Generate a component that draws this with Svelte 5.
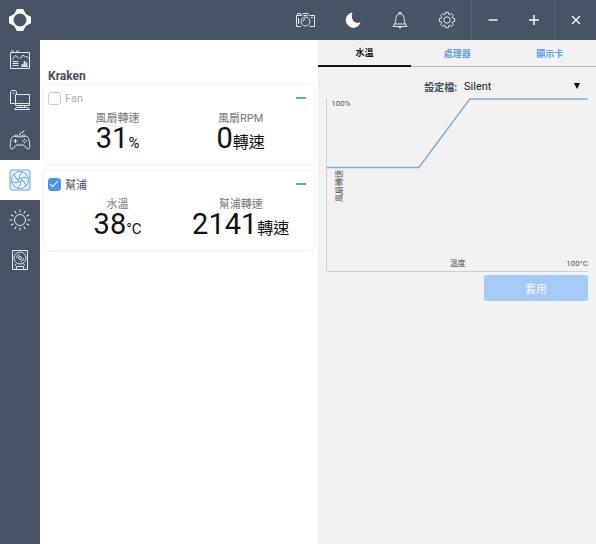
<script>
  const devices = $state([
    {
      id: 'fan',
      name: 'Fan',
      enabled: false,
      readings: [
        { label: '風扇轉速', value: '31', unit: '%' },
        { label: '風扇RPM', value: '0', unit: '轉速', wide: true }
      ]
    },
    {
      id: 'pump',
      name: '幫浦',
      enabled: true,
      readings: [
        { label: '水溫', value: '38', unit: '°C' },
        { label: '幫浦轉速', value: '2141', unit: '轉速', wide: true }
      ]
    }
  ]);

  const sections = ['dashboard', 'computer', 'games', 'cooling', 'lighting', 'storage'];
  const tabs = ['水溫', '處理器', '顯示卡'];
  const tools = ['camera', 'moon', 'bell', 'gear'];

  let section = $state('cooling');
  let tab = $state('水溫');
  let profile = $state('Silent');

  // eight-toothed gear outline
  const gear = Array.from({ length: 8 }, (_, i) => {
    const point = (r, deg) => {
      const a = ((i * 45 + deg) * Math.PI) / 180;
      return `${(12 + r * Math.cos(a)).toFixed(2)},${(12 + r * Math.sin(a)).toFixed(2)}`;
    };
    return [point(5.8, -18), point(7.8, -11), point(7.8, 11), point(5.8, 18)].join(' ');
  }).join(' ');
</script>

{#snippet icon(name)}
  <svg class="icon" viewBox="0 0 24 24" aria-hidden="true">
    {#if name === 'dashboard'}
      <path d="M2.500 4.500h19v16h-19zM3 3h3M8 3h3M4 11.500l3.500-4L11 10.500M12.500 10.500l2.500-3.500 2.500 2 1-1 2 2.500M4.500 13.500h6M4.500 15.500h6M4.500 17.500h6M13 18.500h7" />
      <path d="M14.500 18v-2M16.500 18v-5M18.500 18v-3.500" stroke-width="1.7" />
    {:else if name === 'computer'}
      <path d="M7.500 15.500h-5V3.500l1-1h4l1 1.500v2M4.500 5h2M7.500 6.500h14v11h-14zM7.500 15.500h14M12.500 17.500v2M16.500 17.500v2M8 19.500h12l1.500 2h-15z" />
    {:else if name === 'games'}
      <path d="M12 8V5.500c0-1.500 4-.5 4-3M8 8.500C4 7.500 3 10 2.500 14.500c-.5 4-.5 6.500 1.500 6.500s3-4 5-4h6c2 0 3 4 5 4s2-2.500 1.500-6.500C21 10 20 7.500 16 8.500c-2 .5-6 .5-8 0zM7 8c0-1.500 2.500-1.500 3 0M14 8c.5-1.500 3-1.500 3 0M7.500 11v4M5.500 13h4" />
      <circle cx="16.500" cy="11.300" r=".4" /><circle cx="16.500" cy="14.700" r=".4" />
      <circle cx="14.800" cy="13" r=".4" /><circle cx="18.200" cy="13" r=".4" />
    {:else if name === 'cooling'}
      <rect x="2" y="2" width="20" height="20" rx="1.500" />
      <circle cx="12" cy="12" r="8.500" /><circle cx="12" cy="12" r="1.800" />
      {#each [0, 60, 120, 180, 240, 300] as turn}
        <path d="M11.500 10.200c-.5-2.500.5-4.500 3-5.900" transform="rotate({turn} 12 12)" />
      {/each}
      <path d="M3.500 4h1M19.500 4h1M3.500 20h1M19.500 20h1" />
    {:else if name === 'lighting'}
      <circle cx="12" cy="12" r="5.500" />
      {#each [0, 30, 60, 90, 120, 150, 180, 210, 240, 270, 300, 330] as turn}
        <path d="M12 1.500v3" transform="rotate({turn} 12 12)" />
      {/each}
    {:else if name === 'storage'}
      <path d="M4.500 2.500h15v19h-15zM8.500 21v-2.500h7V21M8 16l-1.500 2M15.500 15.500l1 2" />
      <circle cx="12" cy="10" r="6" /><circle cx="12" cy="10" r="1.500" />
      <path d="M8.500 10a3.500 3.500 0 0 1 3-3.500M15.500 10a3.500 3.500 0 0 1-3 3.500M6 4h.5M17.500 4h.5M17.500 20h.5M6 20h.5" />
    {:else if name === 'camera'}
      <path d="M7 18.500H2.500V7.500h5L9 5.500h5l1.500 2h5v11h-5M3.500 7V5.500h3V7M4.500 10v6M19 9.500h-2M9.500 7.500h4" />
      <circle cx="11.500" cy="13.500" r="4.500" /><path d="M9 13.500a2.500 2.500 0 0 1 2.500-2.500" />
    {:else if name === 'moon'}
      <path class="solid" d="M11 5A7.200 7.200 0 1 0 19 15C13.500 17 8.500 11 11 5z" />
    {:else if name === 'bell'}
      <path d="M11 6V4.500h2V6M6.500 16c1.500-2 1-4 1.500-6.500C8.500 7 10 6 12 6s3.500 1 4 3.500c.5 2.500 0 4.500 1.500 6.500zM6.500 16l-1.500 2.500h14L17.500 16M10.500 18.500c0 1.800 3 1.800 3 0" />
    {:else if name === 'gear'}
      <polygon points={gear} /><circle cx="12" cy="12" r="3.200" />
    {/if}
  </svg>
{/snippet}

<div class="app">
  <header class="titlebar">
    <svg class="logo" viewBox="0 0 24 24" role="img" aria-label="CAM">
      <path
        fill-rule="evenodd"
        d="M10 1h4c1.500 0 2 .7 2.300 2 .3 1.200.8 1.600 1.700 3 1.400.9 1.800 1.400 3 1.700 1.300.3 2 .8 2 2.300v4c0 1.500-.7 2-2 2.300-1.200.3-1.600.8-3 1.700-.9 1.400-1.400 1.800-1.700 3-.3 1.300-.8 2-2.300 2h-4c-1.500 0-2-.7-2.300-2-.3-1.200-.8-1.600-1.700-3-1.400-.9-1.800-1.400-3-1.700-1.300-.3-2-.8-2-2.300v-4c0-1.500.7-2 2-2.300 1.200-.3 1.600-.8 3-1.700.9-1.400 1.400-1.800 1.700-3 .3-1.300.8-2 2.300-2zM12 5.500a6.500 6.500 0 1 0 0 13 6.500 6.500 0 0 0 0-13z"
      />
    </svg>
    <div class="tools">
      {#each tools as tool}
        <button aria-label={tool}>{@render icon(tool)}</button>
      {/each}
    </div>
    <div class="window-controls">
      <button aria-label="Minimize"><svg viewBox="0 0 12 12"><path d="M1.500 6h9" /></svg></button>
      <button aria-label="Maximize"><svg viewBox="0 0 12 12"><path d="M1 6h10M6 1v10" /></svg></button>
      <button aria-label="Close"><svg viewBox="0 0 12 12"><path d="M2 2l8 8M10 2l-8 8" /></svg></button>
    </div>
  </header>

  <div class="body">
    <nav class="sidebar">
      {#each sections as name}
        <button class:active={section === name} aria-label={name} onclick={() => (section = name)}>
          {@render icon(name)}
        </button>
      {/each}
    </nav>

    <main class="devices">
      <h1>Kraken</h1>
      {#each devices as device (device.id)}
        <section class="card">
          <div class="card-head">
            <input type="checkbox" id={device.id} bind:checked={device.enabled} />
            <label for={device.id} class:off={!device.enabled}>{device.name}</label>
            <button class="collapse" aria-label="Collapse"></button>
          </div>
          <div class="readings">
            {#each device.readings as reading}
              <div class="reading">
                <span class="caption">{reading.label}</span>
                <span class="value">{reading.value}<span class="unit" class:wide={reading.wide}>{reading.unit}</span></span>
              </div>
            {/each}
          </div>
        </section>
      {/each}
    </main>

    <aside class="panel">
      <div class="tabs" role="tablist">
        {#each tabs as name}
          <button role="tab" aria-selected={tab === name} class:active={tab === name} onclick={() => (tab = name)}>
            {name}
          </button>
        {/each}
      </div>

      <div class="settings">
        <div class="profile">
          <label for="profile">設定檔:</label>
          <div class="select">
            <select id="profile" bind:value={profile}>
              <option>Silent</option>
              <option>Performance</option>
            </select>
            <svg class="arrow" viewBox="0 0 6 6" aria-hidden="true"><path d="M0 0h6L3 6z" /></svg>
          </div>
        </div>

        <div class="chart">
          <svg viewBox="0 0 261 172" preserveAspectRatio="none" aria-hidden="true">
            <path d="M0 69H92L143 1H261" />
          </svg>
          <span class="y-max">100%</span>
          <span class="y-title">風扇轉速</span>
          <span class="x-title">溫度</span>
          <span class="x-max">100°C</span>
        </div>

        <button class="apply" disabled>套用</button>
      </div>
    </aside>
  </div>
</div>

<style>
  :global(body) {
    margin: 0;
  }

  .app {
    display: flex;
    flex-direction: column;
    min-height: 100vh;
    font-family: Roboto, 'Noto Sans CJK TC', sans-serif;
    color: #454e5e;
    background: #fff;
  }

  button {
    padding: 0;
    border: none;
    background: none;
    font: inherit;
    color: inherit;
    cursor: pointer;
  }

  .icon {
    display: block;
    width: 24px;
    height: 24px;
    fill: none;
    stroke: currentColor;
    stroke-width: 1;
    stroke-linejoin: round;
  }

  .icon .solid {
    fill: #fff;
    stroke: #fff;
  }

  .titlebar {
    display: flex;
    align-items: stretch;
    height: 40px;
    background: #485365;
    color: #dfe5ed;
  }

  .logo {
    width: 24px;
    height: 24px;
    margin: 8px auto 8px 8px;
    fill: #fff;
  }

  .tools,
  .window-controls {
    display: flex;
  }

  .tools {
    padding-right: 1px;
  }

  .tools button {
    display: flex;
    align-items: center;
    justify-content: center;
    width: 47px;
  }

  .window-controls button {
    display: flex;
    align-items: center;
    justify-content: center;
    width: 41px;
  }

  .window-controls button:first-child,
  .window-controls button:last-child {
    border-left: 1px solid #5b6677;
    width: 42px;
  }

  .window-controls svg {
    width: 12px;
    height: 12px;
    fill: none;
    stroke: #f4f6f9;
    stroke-width: 1.5;
  }

  .body {
    display: flex;
    flex: 1;
  }

  .sidebar {
    display: flex;
    flex-direction: column;
    flex: 0 0 40px;
    background: #485365;
    color: #dfe5ed;
  }

  .sidebar button {
    display: flex;
    align-items: center;
    justify-content: center;
    height: 40px;
  }

  .sidebar button.active {
    background: #fff;
    color: #6aa4cf;
  }

  .sidebar button.active .icon rect {
    fill: #e6f2fb;
  }

  .devices,
  .panel {
    box-sizing: border-box;
    flex: 1 1 50%;
    min-width: 0;
  }

  .devices {
    display: flex;
    flex-direction: column;
    gap: 7px;
    padding: 28px 4px 0;
  }

  h1 {
    margin: 0 4px -6px;
    font-size: 12px;
    line-height: 16px;
    font-weight: 700;
  }

  .card {
    height: 79px;
    border-radius: 4px;
    box-shadow: 0 0 3px rgba(0, 0, 0, 0.12);
  }

  .card-head {
    display: flex;
    align-items: center;
    gap: 4px;
    height: 26px;
    padding: 0 8px 0 4px;
    font-size: 11px;
  }

  .card-head input {
    appearance: none;
    box-sizing: border-box;
    width: 13px;
    height: 13px;
    margin: 0;
    border: 1px solid #b5d0e8;
    border-radius: 3px;
    background: #fff;
  }

  .card-head input:checked {
    border-color: #4a95ea;
    background: #4a95ea;
  }

  .card-head input:checked::after {
    content: '';
    display: block;
    width: 7px;
    height: 3px;
    margin: 2px 1px;
    border: solid #fff;
    border-width: 0 0 1px 1px;
    transform: rotate(-45deg);
  }

  label.off {
    color: #adadad;
  }

  .collapse {
    width: 10px;
    height: 2px;
    margin-left: auto;
    background: #65a3cb;
  }

  .readings {
    display: flex;
    padding: 1px 12px 0;
  }

  .reading {
    display: flex;
    flex: 1 1 0;
    flex-direction: column;
    align-items: center;
  }

  .caption {
    font-size: 11px;
    line-height: 14px;
    color: #777;
  }

  .value {
    font-size: 29px;
    line-height: 24px;
    color: #111;
    white-space: nowrap;
  }

  .unit {
    font-size: 15px;
    line-height: 16px;
  }

  .unit.wide {
    font-size: 16px;
  }

  .panel {
    background: #f1f1f1;
  }

  .tabs {
    display: flex;
    height: 27px;
  }

  .tabs button {
    box-sizing: border-box;
    flex: 1 1 0;
    border-bottom: 1px solid #b9b9b9;
    font-size: 9px;
    font-weight: 700;
    color: #5b9fe8;
  }

  .tabs button.active {
    border-bottom: 2px solid #111;
    color: #111;
  }

  .settings {
    display: flex;
    flex-direction: column;
    padding: 8px 8px 0;
  }

  .profile {
    display: flex;
    align-items: center;
    justify-content: flex-end;
    gap: 7px;
    height: 22px;
    margin-bottom: 1px;
    font-size: 11px;
  }

  .profile label {
    font-size: 10px;
    font-weight: 700;
  }

  .select {
    position: relative;
    width: 124px;
  }

  .select select {
    appearance: none;
    width: 100%;
    padding: 0;
    border: none;
    background: none;
    font: inherit;
    color: #222;
  }

  .arrow {
    position: absolute;
    top: 3px;
    right: 8px;
    width: 6px;
    height: 6px;
    pointer-events: none;
  }

  .chart {
    position: relative;
    height: 173px;
    border: solid #c4d2e4;
    border-width: 0 0 1px 1px;
    font-size: 8px;
    line-height: 10px;
    color: #555;
  }

  .chart svg {
    display: block;
    width: 100%;
    height: 100%;
  }

  .chart path {
    fill: none;
    stroke: #7fb0d8;
    stroke-width: 1.5;
    vector-effect: non-scaling-stroke;
  }

  .chart span {
    position: absolute;
  }

  .y-max {
    top: 1px;
    left: 4px;
  }

  .y-title {
    top: 72px;
    left: 8px;
    writing-mode: vertical-rl;
    text-orientation: sideways;
    transform: rotate(180deg);
  }

  .x-title {
    right: 0;
    bottom: 2px;
    left: 0;
    text-align: center;
  }

  .x-max {
    right: 0;
    bottom: 2px;
  }

  .apply {
    align-self: flex-end;
    width: 104px;
    height: 26px;
    margin-top: 3px;
    border-radius: 2px;
    background: #a5cbf6;
    font-size: 11px;
    color: #f4f9ff;
  }
</style>
